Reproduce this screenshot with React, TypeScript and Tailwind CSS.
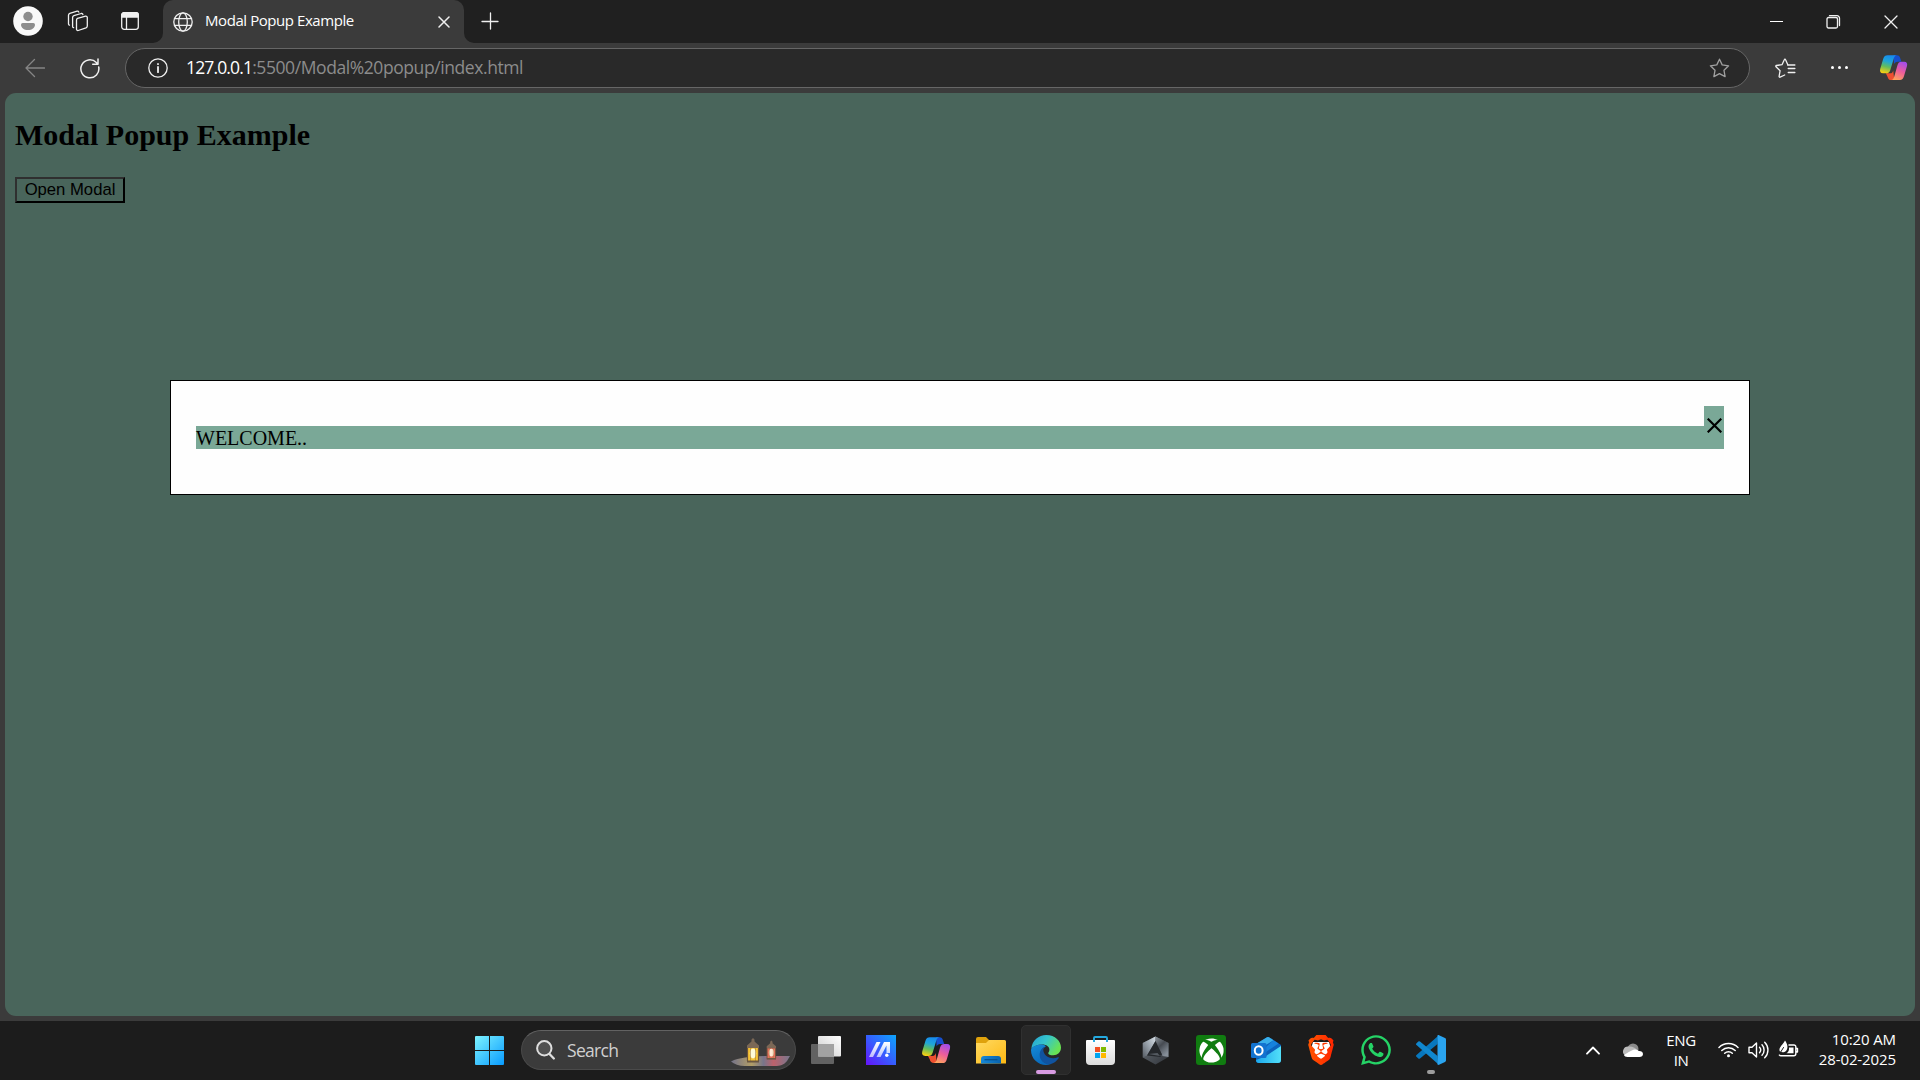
import type { ReactNode } from "react";
import { FaWhatsapp, FaXbox } from "react-icons/fa";
import { SiBrave } from "react-icons/si";

const line = { fill: "none", stroke: "currentColor", strokeLinecap: "round", strokeLinejoin: "round" } as const;

function ProfileIcon() {
  return (
    <svg width="30" height="30" viewBox="0 0 30 30">
      <circle cx="15" cy="15" r="14.8" fill="#f9f9f9" />
      <circle cx="15" cy="10.5" r="4.7" fill="#8d8d8d" />
      <path d="M9.7 17h10.6a1.7 1.7 0 0 1 1.7 1.7c0 3-3 5.300-7 5.300s-7-2.300-7-5.300A1.7 1.700 0 0 1 9.700 17z" fill="#8d8d8d" />
    </svg>
  );
}

function WorkspacesIcon() {
  return (
    <svg width="22" height="22" viewBox="0 0 22 22" {...line} strokeWidth="1.3">
      <path d="M10.500 8.400 18.600 6.100a1.400 1.400 0 0 1 1.700 1.400v8.600a2 2 0 0 1-1.300 1.800l-7.800 2.600a1.300 1.300 0 0 1-1.700-1.200v-9.200a1.800 1.800 0 0 1 1-1.700z" />
      <path d="M6.600 17.700a1.300 1.300 0 0 1-1-1.200V7.600a2 2 0 0 1 1.300-1.900l7.300-2.200a1.400 1.400 0 0 1 1.700 1" />
      <path d="M2.500 15.200a1.300 1.300 0 0 1-1-1.200V5.300a2 2 0 0 1 1.300-1.900l7.300-2.200a1.400 1.400 0 0 1 1.700.9" />
    </svg>
  );
}

function TabActionsIcon() {
  return (
    <svg width="18" height="18" viewBox="0 0 18 18" {...line} strokeWidth="1.300">
      <rect x=".7" y=".7" width="16.600" height="16.600" rx="2.500" />
      <path d="M.7 5V3A2.300 2.300 0 0 1 3 .700h12A2.300 2.300 0 0 1 17.300 3v2z" fill="currentColor" />
      <path d="M5.500 5v12" />
    </svg>
  );
}

function GlobeIcon() {
  return (
    <svg width="20" height="20" viewBox="0 0 20 20" {...line} strokeWidth="1.300">
      <circle cx="10" cy="10" r="9.200" />
      <ellipse cx="10" cy="10" rx="4.300" ry="9.200" />
      <path d="M1.500 6.700h17M1.500 13.300h17" />
    </svg>
  );
}

function Star({ lines = false }: { lines?: boolean }) {
  return (
    <svg width="21" height="20" viewBox="0 0 21 20" {...line} strokeWidth="1.300">
      {lines ? (
        <>
          <path d="M12.800 6.800 10.600 1.700a.7.7 0 0 0-1.300 0L7 6.700l-5.600.8c-.6.100-.8.800-.4 1.200l4.100 4-1 5.700c-.1.600.5 1 1 .800L9.700 17" />
          <path d="M12.800 7h7M13.300 10.500h6.500M13.300 14.500h6.500" strokeWidth="1.500" />
        </>
      ) : (
        <path d="m10.500 1.200 2.700 5.700 6.400.9-4.600 4.500 1.100 6.300-5.600-3-5.600 3L6 12.300 1.400 7.800l6.400-.9z" />
      )}
    </svg>
  );
}

function CopilotIcon({ id, size }: { id: string; size: number }) {
  return (
    <svg width={size} height={size} viewBox="0 0 30 30">
      <defs>
        <linearGradient id={id + "a"} x1=".6" y1="0" x2=".35" y2="1">
          <stop offset="0" stopColor="#168af0" />
          <stop offset=".35" stopColor="#1fa5d8" />
          <stop offset=".65" stopColor="#62bd5d" />
          <stop offset="1" stopColor="#f6cf13" />
        </linearGradient>
        <linearGradient id={id + "b"} x1=".7" y1="0" x2=".3" y2="1">
          <stop offset="0" stopColor="#a34dea" />
          <stop offset=".5" stopColor="#ed5d9b" />
          <stop offset="1" stopColor="#ffa35c" />
        </linearGradient>
      </defs>
      <path d="M15 2.300h3.500c2 0 2.900 1.200 3.500 3.200l1.200 3.500h-4c-2 0-3 1-3.600 2.500z" fill="#164fce" />
      <path d="M7 21h4.500c2 0 2.500-1 3.200-3l1 8.800c-.5 1-1.400 1.200-2.800 1.200-2.700 0-3.400-1.300-4.200-3.800z" fill="#ee5030" />
      <path d="M9 2.300h9.500c-2 .2-2.700 1.700-3.300 3.700l-3.500 11.500c-.7 2.500-2 3.500-4.300 3.500H4.200C1.500 21 .5 19 1.300 16.300L4.400 6C5.200 3.300 6.500 2.300 9 2.300z" fill={`url(#${id}a)`} />
      <path d="M21.500 28h-9c2-.2 2.700-1.700 3.300-3.700l3.300-11.700C19.800 10 21 9 23.500 9H26c2.700 0 3.700 2 2.900 4.700l-3 10.200c-.8 3-2 4.100-4.400 4.100z" fill={`url(#${id}b)`} />
    </svg>
  );
}

function TabStrip() {
  return (
    <div className="flex h-[43px] items-center bg-[#202020] text-[#f0f0f0]">
      <div className="ml-[13px] mt-[-1px]"><ProfileIcon /></div>
      <div className="ml-[24px] mt-[-1px]"><WorkspacesIcon /></div>
      <div className="ml-[32px] mt-[-1px]"><TabActionsIcon /></div>
      <div className="relative ml-[24px] flex h-[43px] w-[301px] items-center rounded-t-[10px] bg-[#3b3b3b]">
        <svg className="absolute -left-[10px] bottom-0" width="10" height="10"><path d="M10 0v10H0A10 10 0 0 0 10 0z" fill="#3b3b3b" /></svg>
        <svg className="absolute -right-[10px] bottom-0" width="10" height="10"><path d="M0 0v10h10A10 10 0 0 1 0 0z" fill="#3b3b3b" /></svg>
        <div className="ml-[10px]"><GlobeIcon /></div>
        <span className="ml-[12px] mt-[-2px] w-[200px] whitespace-nowrap text-[15px] tracking-[-0.43px] text-white">Modal Popup Example</span>
        <svg className="ml-[33px]" width="12" height="12" viewBox="0 0 12 12" {...line} strokeWidth="1.500"><path d="m1 1 10 10M11 1 1 11" /></svg>
      </div>
      <svg className="ml-[17px] mt-[-1px]" width="18" height="18" viewBox="0 0 18 18" {...line} strokeWidth="1.300"><path d="M9.500 1v16M1 9.500h16" /></svg>
      <div className="ml-auto flex items-center">
        <div className="h-px w-[13px] bg-white" />
        <svg className="ml-[43px]" width="15" height="14" viewBox="0 0 15 14" {...line} strokeWidth="1.300">
          <rect x="1" y="2.500" width="10.500" height="10.500" rx="1.500" /><path d="M3.500.7h7.500a2.500 2.500 0 0 1 2.500 2.500v7.300" />
        </svg>
        <svg className="ml-[43px] mr-[22px]" width="14" height="14" viewBox="0 0 14 14" {...line} strokeWidth="1.300"><path d="m1 1 12 12M13 1 1 13" /></svg>
      </div>
    </div>
  );
}

function Toolbar() {
  return (
    <div className="flex h-[50px] items-center bg-[#3b3b3b] text-[#f0f0f0]">
      <svg className="ml-[25px] mt-[-1px] text-[#858585]" width="20" height="20" viewBox="0 0 20 20" {...line} strokeWidth="1.300"><path d="M19.500 10H1M9.500 1.500 1 10l8.500 8.500" /></svg>
      <svg className="ml-[35px]" width="20" height="21" viewBox="0 0 20 21" {...line} strokeWidth="1.500"><path d="M18.700 9A9 9 0 1 1 16.300 4.500L18 6.200M18 1v5.300h-5.300" /></svg>
      <div className="ml-[25px] flex h-10 w-[1625px] items-center rounded-full border border-[#666] bg-[#292929]">
        <svg className="ml-[22px]" width="20" height="20" viewBox="0 0 20 20" {...line} strokeWidth="1.300"><circle cx="10" cy="10" r="9.200" /><path d="M10 9v5.200M10 6v.2" strokeWidth="1.800" /></svg>
        <span className="ml-[18px] mt-[-1px] whitespace-nowrap text-[17.500px] tracking-[-0.42px] text-[#8c8c8c]"><span className="tracking-[-0.85px] text-white">127.0.0.1</span>:5500/Modal%20popup/index.html</span>
        <div className="ml-auto mr-[19px] text-[#a0a0a0]"><Star /></div>
      </div>
      <div className="ml-[25px]"><Star lines /></div>
      <div className="ml-[35px] flex gap-[4px] mt-[-1px]">
        <i className="size-[3px] rounded-full bg-white" /><i className="size-[3px] rounded-full bg-white" /><i className="size-[3px] rounded-full bg-white" />
      </div>
      <div className="ml-[31px] mt-[-1px]"><CopilotIcon id="t" size={29} /></div>
    </div>
  );
}

function Page() {
  return (
    <div className="h-[928px] bg-[#3b3b3b] px-[5px] pb-[5px]">
      <div className="flex h-[923px] flex-col items-start rounded-[11px] bg-[#49655b] px-[10px] font-['Liberation_Serif',serif] text-black">
        <h2 className="mt-[25px] text-[30px] leading-[34px] font-bold">Modal Popup Example</h2>
        <button className="mt-[25px] h-[26px] w-[110px] border-2 border-t-[#2f2f2f] border-r-black border-b-black border-l-[#2f2f2f] text-center font-['Liberation_Sans',sans-serif] text-[16.667px] leading-[20px]">Open Modal</button>
        <div className="mt-[177px] h-[115px] w-[1580px] self-center border border-black bg-[#fefefe] p-[25px]">
          <div className="flex">
            <div className="mt-[20px] h-[23px] flex-1 bg-[#7aa897] text-[20px] leading-[24px]">WELCOME..</div>
            <div className="flex h-[43px] w-[20px] bg-[#7aa897]">
              <svg className="ml-[3px] mt-[12px]" width="15" height="15" viewBox="0 0 15 15" stroke="#000" strokeWidth="2.200"><path d="m.7.7 13.600 13.600M14.300.7.7 14.300" /></svg>
            </div>
          </div>
        </div>
      </div>
    </div>
  );
}

function StartIcon() {
  return (
    <svg width="29" height="29" viewBox="0 0 29 29">
      <defs><linearGradient id="win" gradientUnits="userSpaceOnUse" x1="0" y1="0" x2="29" y2="29"><stop stopColor="#7df3ff" /><stop offset="1" stopColor="#089bff" /></linearGradient></defs>
      <path d="M0 1a1 1 0 0 1 1-1h13v14H0zM15 0h13a1 1 0 0 1 1 1v13H15zM0 15h14v14H1a1 1 0 0 1-1-1zM15 15h14v13a1 1 0 0 1-1 1H15z" fill="url(#win)" />
    </svg>
  );
}

function Lantern({ x, y, s, glow, mid }: { x: number; y: number; s: number; glow: string; mid: string }) {
  return (
    <g transform={`translate(${x} ${y}) scale(${s})`}>
      <path d="M6 1.500 7.500 0 9 1.500v2l4.500 4V10h-12V7.500L6 3.500z" fill="#7b6856" />
      <path d="M2 10h11v13H2z" fill={glow} />
      <ellipse cx="7.500" cy="15.500" rx="3.200" ry="5" fill={mid} />
      <path d="M2 10v13M13 10v13" stroke="#6d533b" strokeWidth="1.200" />
      <path d="M5 10v13M10 10v13" stroke="#a5803c" strokeWidth=".6" />
      <path d="M1.500 22.500h12v2h-12z" fill="#6b5742" />
    </g>
  );
}

function SearchBox() {
  return (
    <div className="ml-[17px] flex h-10 w-[275px] items-center rounded-full border border-[#4a4a4a] border-t-[#626262] bg-[#3b3b3b]">
      <svg className="ml-[14px]" width="19" height="20" viewBox="0 0 19 20" {...line} stroke="#dedede" strokeWidth="2"><circle cx="8.300" cy="8.300" r="7.200" fill="#505050" /><path d="m13.500 14 4.300 4.500" strokeWidth="2.300" /></svg>
      <span className="ml-[12px] text-[17.500px] tracking-[-0.7px] text-[#d0d0d0]">Search</span>
      <svg className="ml-auto mr-[4px] mt-[5px]" width="60" height="29" viewBox="0 0 60 29">
        <defs><linearGradient id="shore"><stop stopColor="#74738a" /><stop offset=".35" stopColor="#b19d67" /><stop offset=".55" stopColor="#77758b" /><stop offset=".72" stopColor="#bd626c" /><stop offset="1" stopColor="#77778e" /></linearGradient></defs>
        <path d="M0 23.500c8-4 20-5 35-5.500h24l-3 5c-3 4-7 5-12 5H14C8 28 3 26 0 23.500z" fill="url(#shore)" />
        <Lantern x={14.500} y={0} s={1} glow="#f6c335" mid="#fffbd8" />
        <Lantern x={34.500} y={2.500} s={0.78} glow="#e5705c" mid="#ffe9d5" />
      </svg>
    </div>
  );
}

function TaskViewIcon() {
  return (
    <svg width="30" height="30" viewBox="0 0 30 30">
      <defs><linearGradient id="tv" x1="0" y1="1" x2="1" y2="0"><stop stopColor="#ccc" /><stop offset="1" stopColor="#fff" /></linearGradient></defs>
      <rect x="0" y="9" width="23" height="20" rx="1" fill="#626262" />
      <rect x="7" y="1" width="23" height="20.500" rx="1" fill="url(#tv)" />
      <path d="M7 9h16v12.500H7z" fill="#a2a2a2" />
    </svg>
  );
}

function MyAsusIcon() {
  return (
    <svg width="30" height="30" viewBox="0 0 30 30">
      <defs>
        <linearGradient id="asus" x1="0" y1="1" x2="1" y2="0"><stop stopColor="#6612f8" /><stop offset=".5" stopColor="#355fff" /><stop offset="1" stopColor="#0ca6fc" /></linearGradient>
        <linearGradient id="asusw" x1="0" y1="1" x2="0" y2="0"><stop stopColor="#fff" stopOpacity=".65" /><stop offset="1" stopColor="#fff" /></linearGradient>
      </defs>
      <path d="M0 0h30v30H0z" fill="url(#asus)" />
      <path d="m3 22 7.500-15h4L7 22zM10.500 22 18 7h6v11h-3.500v-7.500L14.500 22z" fill="url(#asusw)" />
      <circle cx="20.800" cy="20.300" r="1.700" fill="#fff" />
    </svg>
  );
}

function FolderIcon() {
  return (
    <svg width="30" height="30" viewBox="0 0 30 30">
      <defs>
        <linearGradient id="fold" x1="0" y1="0" x2="1" y2="1"><stop stopColor="#ffda62" /><stop offset="1" stopColor="#fdb913" /></linearGradient>
        <linearGradient id="foldb" x1="0" y1="0" x2="1" y2="0"><stop stopColor="#1688d8" /><stop offset="1" stopColor="#0963ad" /></linearGradient>
      </defs>
      <path d="M0 4a2 2 0 0 1 2-2h8l3 3v6H0z" fill="#dfa20c" />
      <path d="M0 8h10l3-3h15.500A1.500 1.500 0 0 1 30 6.500v22H0z" fill="url(#fold)" />
      <path d="M5 28.500V24a3 3 0 0 1 3-3h14a3 3 0 0 1 3 3v4.500z" fill="url(#foldb)" />
      <path d="M8.500 24.700h13" stroke="#064e8b" strokeWidth="1.200" />
    </svg>
  );
}

function EdgeIcon() {
  return (
    <svg width="30" height="30" viewBox="0 0 256 256">
      <defs>
        <linearGradient id="e1" x1="0" y1="0" x2="1" y2=".5"><stop stopColor="#249ed2" /><stop offset=".5" stopColor="#35c5cd" /><stop offset="1" stopColor="#68e254" /></linearGradient>
        <linearGradient id="e2" x1="0" y1="0" x2=".5" y2="1"><stop stopColor="#158cd8" /><stop offset="1" stopColor="#0968b9" /></linearGradient>
      </defs>
      <path d="M3 117C9 47 65 0 130 0c77 0 126 54 126 107 0 42-31 66-66 66-27 0-43-9-43-18 0-7 10-11 10-29 0-25-26-44-60-44-43 0-75 14-94 35z" fill="url(#e1)" />
      <path d="M96 81C42 81 1 104 0 128c0 76 61 128 128 128 12 0 25-2 37-6-48-4-85-39-85-82 0-33 18-61 48-70-9-10-20-16-32-17z" fill="url(#e2)" />
      <path d="M128 98c-34 7-54 38-54 72 0 47 42 83 91 80 30-8 56-29 72-54 3-6-1-9-7-6-12 6-27 9-41 9-48 0-84-34-84-70 0-13 9-25 23-31z" fill="#10539f" />
    </svg>
  );
}

function StoreIcon() {
  return (
    <svg width="30" height="30" viewBox="0 0 30 30">
      <defs><linearGradient id="store" x1="0" y1="0" x2="0" y2="1"><stop stopColor="#fff" /><stop offset="1" stopColor="#dcdcdc" /></linearGradient></defs>
      <path d="M0 6a1 1 0 0 1 1-1h27a1 1 0 0 1 1 1v20a4 4 0 0 1-4 4H4a4 4 0 0 1-4-4z" fill="url(#store)" />
      <path d="M8 7V3a1 1 0 0 1 1-1h11a1 1 0 0 1 1 1v4" fill="none" stroke="#24a9df" strokeWidth="1.900" />
      <path d="M9 12h5v5H9z" fill="#f25022" /><path d="M15 12h5v5h-5z" fill="#7fba00" /><path d="M9 18h5v5H9z" fill="#00a4ef" /><path d="M15 18h5v5h-5z" fill="#ffb900" />
    </svg>
  );
}

function CrateIcon() {
  return (
    <svg width="30" height="30" viewBox="0 0 30 30">
      <defs>
        <linearGradient id="crl" x1="1" y1="0" x2="0" y2="1"><stop stopColor="#d7e0e8" /><stop offset=".5" stopColor="#98a1aa" /><stop offset="1" stopColor="#565c64" /></linearGradient>
        <linearGradient id="crr" x1="0" y1="0" x2=".6" y2="1"><stop stopColor="#8c949c" /><stop offset=".5" stopColor="#464b52" /><stop offset="1" stopColor="#868f99" /></linearGradient>
        <linearGradient id="crb" x1="0" y1="0" x2="1" y2="1"><stop stopColor="#6a7077" /><stop offset="1" stopColor="#30343a" /></linearGradient>
      </defs>
      <path d="m14.500 1.500 13 6.500v14l-13 7.500L1.800 22.500V8z" fill="url(#crb)" />
      <path d="M14.500 1.500 1.800 8v14.500L6 20.500l8.500-14.500z" fill="url(#crl)" />
      <path d="m14.500 1.500 13 6.500v14l-6-1L14.500 6z" fill="url(#crr)" />
      <path d="M14.500 6 6 20.500l14 1.500-1-1.500 2-1z" fill="#24272b" />
      <path d="m7.500 19 9-1 2.500 3z" fill="#555b62" />
    </svg>
  );
}

function XboxIcon() {
  return <div className="flex size-[30px] items-center justify-center rounded-[3px] bg-[#107c10]"><FaXbox size={25} color="#fff" /></div>;
}

function OutlookIcon() {
  return (
    <svg width="30" height="30" viewBox="0 0 30 30">
      <defs><linearGradient id="ol" x1="0" y1="0" x2="1" y2="0"><stop stopColor="#1ca8ec" /><stop offset="1" stopColor="#52dff9" /></linearGradient></defs>
      <path d="M5 9 16 2.200a2 2 0 0 1 2 0L30 10v15a3 3 0 0 1-3 3H8a3 3 0 0 1-3-3z" fill="#0c63bd" />
      <path d="m5 9 11-6.800a2 2 0 0 1 2 0l4.500 3L10 13H5z" fill="#38afea" />
      <path d="m22.500 5.200 5 3.200L15 17v-5z" fill="#1682dd" />
      <path d="M30 11v14a3 3 0 0 1-3 3H8a3 3 0 0 1-3-3l10-4z" fill="url(#ol)" />
      <rect y="8" width="15.500" height="15" rx="1.500" fill="#1273d0" />
      <ellipse cx="7.700" cy="15.500" rx="3.900" ry="4.300" fill="none" stroke="#fff" strokeWidth="2" />
    </svg>
  );
}

function BraveIcon() {
  return (
    <div className="relative flex size-[30px] items-center justify-center">
      <svg className="absolute inset-0" width="30" height="30" viewBox="0 0 30 30">
        <defs><linearGradient id="brave"><stop stopColor="#ff5500" /><stop offset="1" stopColor="#ff2500" /></linearGradient></defs>
        <path d="M7 7h16l2 7-5 10-5 3-5-3-5-10z" fill="#fff" />
      </svg>
      <SiBrave className="relative" size={30} fill="url(#brave)" />
    </div>
  );
}

function VsCodeIcon() {
  return (
    <svg width="30" height="30" viewBox="0 0 30 30">
      <path d="m22 1-.5 8L4 23.500a1.300 1.300 0 0 1-1.700 0L.5 21.800a1.300 1.300 0 0 1 0-1.900z" fill="#0877bd" />
      <path d="m22 29-.5-8L4 6.500a1.300 1.300 0 0 0-1.700 0L.5 8.200a1.300 1.300 0 0 0 0 1.900z" fill="#1087ce" />
      <path d="M21.500 8.200V.4c.4-.4 1-.4 1.500-.2l6 2.900a1.800 1.800 0 0 1 1 1.700v20.400a1.800 1.800 0 0 1-1 1.700l-6 2.900c-.5.200-1.100.2-1.500-.2z" fill="#2aa4ef" />
    </svg>
  );
}

const apps: { name: string; icon: ReactNode }[] = [
  { name: "task-view", icon: <TaskViewIcon /> },
  { name: "myasus", icon: <MyAsusIcon /> },
  { name: "copilot", icon: <CopilotIcon id="k" size={30} /> },
  { name: "files", icon: <FolderIcon /> },
  { name: "edge", icon: <EdgeIcon /> },
  { name: "store", icon: <StoreIcon /> },
  { name: "crate", icon: <CrateIcon /> },
  { name: "xbox", icon: <XboxIcon /> },
  { name: "outlook", icon: <OutlookIcon /> },
  { name: "brave", icon: <BraveIcon /> },
  { name: "whatsapp", icon: <FaWhatsapp size={34} className="-m-[2px]" color="#25d366" /> },
  { name: "vscode", icon: <VsCodeIcon /> },
];

function Tray() {
  return (
    <div className="ml-auto mr-[24px] flex items-center text-[15px] leading-[20px] text-white">
      <svg width="14" height="9" viewBox="0 0 14 9" {...line} strokeWidth="1.800"><path d="m1 7.700 6-6.200 6 6.200" /></svg>
      <svg className="ml-[23px]" width="20" height="14" viewBox="0 0 20 14">
        <circle cx="10" cy="6" r="5.500" fill="#8a8a8a" /><path d="M5 3.500A5 5 0 0 0 2 12.500l14-4C13 5 9 3 5 3.500z" fill="#bbb" />
        <path d="M1 12c2-1 7-5 11-5.500 2 0 3 .8 3.500 1.500 2.500-.3 4.500 1 4.500 3s-1.500 3-3.500 3H4.500C2.500 14 1.300 13 1 12z" fill="#fff" />
      </svg>
      <div className="ml-[23px] mt-[-1px] w-[30px] text-center tracking-[-0.400px]">ENG<br />IN</div>
      <svg className="ml-[22px]" width="21" height="16" viewBox="0 0 21 16" {...line} strokeWidth="1.500"><path d="M1 5.500a13.500 13.500 0 0 1 19 0M3.800 8.500a9.500 9.500 0 0 1 13.400 0M6.700 11.300a5.400 5.400 0 0 1 7.600 0" /><circle cx="10.500" cy="13.800" r="1.500" fill="currentColor" stroke="none" /></svg>
      <svg className="ml-[9px]" width="21" height="18" viewBox="0 0 21 18" {...line} strokeWidth="1.400"><path d="M1 6.300h3L8.500 2v14L4 11.700H1zM11.500 6.300a4 4 0 0 1 0 5.400M14 3.800a7.500 7.500 0 0 1 0 10.400M16.700 1.200a11 11 0 0 1 0 15.600" /></svg>
      <svg className="ml-[9px] mt-[-2px]" width="21" height="18" viewBox="0 0 21 18" {...line} strokeWidth="1.400">
        <path d="M11 5h5A1.800 1.800 0 0 1 17.800 6.800v7a2 2 0 0 1-2 2H3a2 2 0 0 1-1.600-.8M18.500 8.500h1v3.500h-1" />
        <path d="M7 .5c2.500 3.500 3.500 7.500 1 10.500-1.800 1.800-4.500 1.500-6 .5C-.2 8 4.500 5.500 7 .5z" fill="currentColor" stroke="none" />
        <path d="M11 7.500h4.500v5.700H8.500c2-1 2.700-3 2.500-5.700z" fill="currentColor" stroke="none" />
        <path d="m1.500 14 4-6.500" stroke="#1c1c1c" strokeWidth="1" />
      </svg>
      <div className="ml-[18px] mt-[-2px] w-[79px] whitespace-nowrap text-right tracking-[-0.100px]"><div>10:20 AM</div><div>28-02-2025</div></div>
    </div>
  );
}

function Taskbar() {
  return (
    <div className="flex h-[59px] items-center bg-[#1c1c1c] pb-px">
      <div className="ml-[475px]"><StartIcon /></div>
      <div className="flex"><SearchBox /></div>
      <div className="ml-[15px] flex items-center gap-[25px]">
        {apps.map((a) => (
          <div key={a.name} className="relative size-[30px]">
            {a.name === "edge" && <>
              <div className="absolute -inset-[10px] rounded-[5px] border border-[#303030] bg-[#282828]" />
              <div className="absolute left-[5px] top-[35px] h-[4px] w-[20px] rounded-full bg-[#d89be2]" />
            </>}
            {a.name === "vscode" && <div className="absolute left-[11px] top-[35px] h-[4px] w-[8px] rounded-full bg-[#9c9c9c]" />}
            <div className="relative">{a.icon}</div>
          </div>
        ))}
      </div>
      <Tray />
    </div>
  );
}

export default function App() {
  return (
    <div className="h-[1080px] w-[1920px] overflow-hidden bg-[#3b3b3b] font-['Open_Sans','Noto_Sans',sans-serif]">
      <TabStrip />
      <Toolbar />
      <Page />
      <Taskbar />
    </div>
  );
}
